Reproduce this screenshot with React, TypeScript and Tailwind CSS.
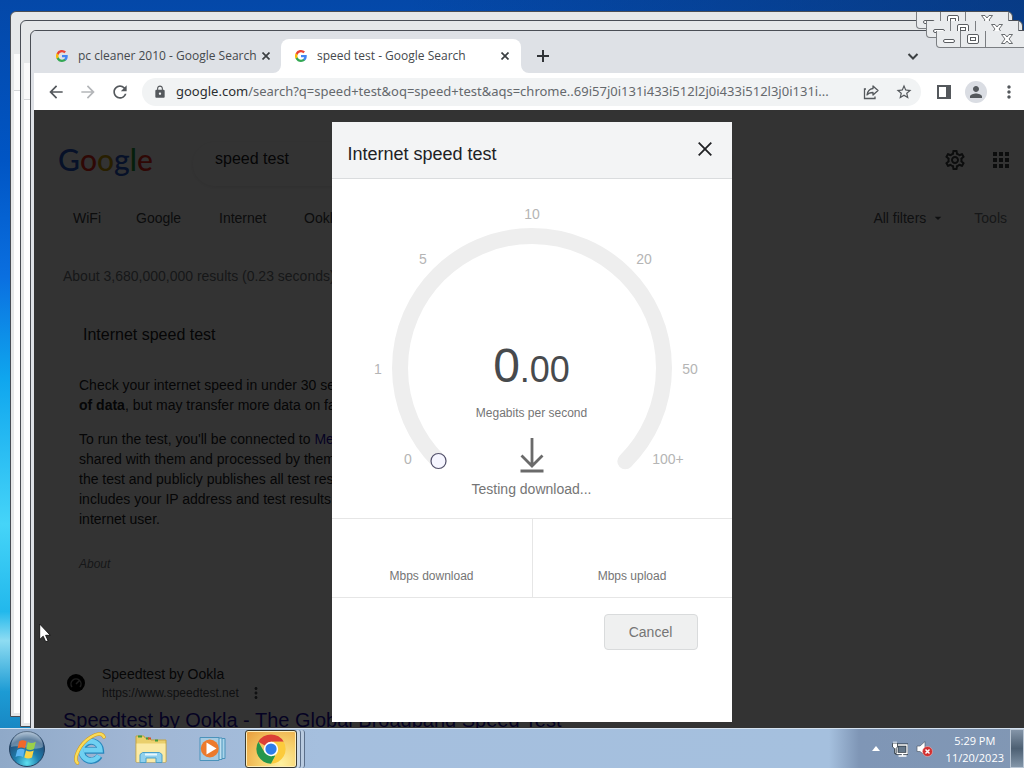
import React from "react";
import {
  MdArrowBack,
  MdArrowForward,
  MdRefresh,
  MdLock,
  MdStarBorder,
  MdPerson,
  MdMoreVert,
  MdApps,
  MdOutlineSettings,
  MdArrowDropDown,
} from "react-icons/md";

function GoogleG() {
  return (
    <svg viewBox="0 0 24 24" className="size-3 shrink-0" aria-hidden="true">
      <path fill="#4285F4" d="M23.5 12.3c0-.9-.1-1.6-.2-2.3H12v4.5h6.5c-.3 1.5-1.1 2.8-2.4 3.6v3h3.9c2.200-2.100 3.500-5.100 3.500-8.800z" />
      <path fill="#34A853" d="M12 24c3.200 0 6-1.100 8-2.900l-3.900-3c-1.100.700-2.500 1.200-4.100 1.200-3.100 0-5.800-2.100-6.700-5H1.300v3.100C3.300 21.300 7.300 24 12 24z" />
      <path fill="#FBBC05" d="M5.300 14.300a7.200 7.200 0 0 1 0-4.600V6.600H1.300a12 12 0 0 0 0 10.800z" />
      <path fill="#EA4335" d="M12 4.700c1.800 0 3.300.6 4.600 1.800L20 3.100A12 12 0 0 0 1.300 6.600l4 3.100c.9-2.800 3.600-5 6.700-5z" />
    </svg>
  );
}

function CaptionButtons() {
  return (
    <div className="absolute top-0 right-[3px] z-10 flex h-[17px] divide-x divide-[#7b7e82] rounded-b-[4px] border-x border-b border-[#7b7e82] bg-[#e9ebed]">
      <button aria-label="Minimize" className="flex w-6 items-center justify-center">
        <svg viewBox="0 0 12 12" className="size-3" fill="#fff" stroke="#5a5d61">
          <rect x="0.500" y="6.500" width="11" height="3" rx="1.500" />
        </svg>
      </button>
      <button aria-label="Restore" className="flex w-[25px] items-center justify-center">
        <svg viewBox="0 0 12 12" className="size-3" fill="#fff" stroke="#5a5d61">
          <rect x="0.500" y="1.500" width="11" height="9" rx="1.500" />
          <rect x="3.500" y="4.500" width="5" height="3" />
        </svg>
      </button>
      <button aria-label="Close window" className="flex w-[42px] items-center justify-center">
        <svg viewBox="0 0 12 12" className="size-3" fill="#fff" stroke="#5a5d61" strokeWidth=".9">
          <path d="M.5 1.500h3.500L6 4l2-2.500h3.500L8 6l3.500 4.500H8L6 8l-2 2.500H.5L4 6z" />
        </svg>
      </button>
    </div>
  );
}

function BackWindow({ place }: { place: string }) {
  return (
    <div className={`absolute overflow-hidden rounded-t-[6px] border border-[#4a4e55] bg-[#e6e8e9] px-[3px] pb-[3px] ${place}`}>
      <CaptionButtons />
      <div className="flex h-full flex-col">
        <div className="h-[42px] shrink-0" />
        <div className="h-[37px] shrink-0 border-b border-[#d5d7d9] bg-[#fafafa]" />
        <div className="flex-1 bg-white" />
      </div>
    </div>
  );
}

function TabStrip() {
  return (
    <div className="flex h-[42px] shrink-0 items-end bg-[#dee1e6] pr-[106px] text-xs text-[#45494d]">
      <div className="flex h-[34px] w-[247px] items-center pr-[7px] pl-[22px]">
        <GoogleG />
        <span className="ml-2.5 flex-1 whitespace-nowrap">pc cleaner 2010 - Google Search</span>
        <TabClose label="Close pc cleaner 2010 tab" />
      </div>
      <div className="relative flex h-[34px] w-60 items-center rounded-t-lg bg-white pr-2 pl-3.5">
        <GoogleG />
        <span className="ml-2.5 flex-1 whitespace-nowrap">speed test - Google Search</span>
        <TabClose label="Close speed test tab" />
        <svg viewBox="0 0 8 8" className="absolute bottom-0 -left-2 size-2" fill="#fff">
          <path d="M8 0v8H0a8 8 0 0 0 8-8z" />
        </svg>
        <svg viewBox="0 0 8 8" className="absolute -right-2 bottom-0 size-2" fill="#fff">
          <path d="M0 0v8h8a8 8 0 0 1-8-8z" />
        </svg>
      </div>
      <button aria-label="New tab" className="flex h-[34px] w-11 items-center justify-center">
        <svg viewBox="0 0 12 12" className="size-3" stroke="#303337" strokeWidth="2">
          <path d="M6 0v12M0 6h12" />
        </svg>
      </button>
      <button aria-label="Search tabs" className="ml-auto flex h-[34px] w-5 items-center justify-center">
        <svg viewBox="0 0 12 12" className="size-3" fill="none" stroke="#3c4043" strokeWidth="2">
          <path d="M1.500 4 6 8.500 10.500 4" />
        </svg>
      </button>
    </div>
  );
}

function TabClose({ label }: { label: string }) {
  return (
    <button aria-label={label} className="flex size-4 items-center justify-center">
      <svg viewBox="0 0 8 8" className="size-2" stroke="#3c4043" strokeWidth="1.700">
        <path d="M.5.5l7 7M7.500.5l-7 7" />
      </svg>
    </button>
  );
}

function Toolbar() {
  return (
    <div className="flex h-[37px] shrink-0 items-center bg-white pr-2.5 pl-3 text-[#54585c]">
      <button aria-label="Back" className="mr-3"><MdArrowBack className="size-5" /></button>
      <button aria-label="Forward" className="mr-3 text-[#b4b6b9]"><MdArrowForward className="size-5" /></button>
      <button aria-label="Reload" className="mr-3"><MdRefresh className="size-5" /></button>
      <form className="flex h-7 min-w-0 flex-1 items-center rounded-full bg-[#f1f3f4] pr-2 pl-[11px]" onSubmit={(e) => e.preventDefault()}>
        <MdLock className="mr-[9px] size-3.5 shrink-0" />
        <div role="textbox" aria-label="Address" aria-readonly="true" className="min-w-0 flex-1 font-['Noto_Sans',sans-serif] text-[13px] whitespace-nowrap text-[#65696d]">
          <span className="text-[#2b2e31]">google.com</span>/search?q=speed+test&amp;oq=speed+test&amp;aqs=chrome..69i57j0i131i433i512l2j0i433i512l3j0i131i...
        </div>
        <button type="button" aria-label="Share" className="mr-4">
          <svg viewBox="0 0 16 16" className="size-4" fill="none" stroke="currentColor" strokeWidth="1.300">
            <path d="M3 5H1.500v9.500H12V12.500" />
            <path d="M10 2l5 4.500-5 4.500V8.500C7 8.500 5.200 9.300 4 11c.5-3.500 2.500-6 6-6.500z" strokeLinejoin="round" />
          </svg>
        </button>
        <button type="button" aria-label="Bookmark"><MdStarBorder className="size-[18px]" /></button>
      </form>
      <button aria-label="Side panel" className="ml-4">
        <svg viewBox="0 0 14 14" className="size-3.5">
          <path d="M1 1h12v12H1z" fill="none" stroke="currentColor" strokeWidth="2" />
          <path d="M9 1h4v12H9z" fill="currentColor" />
        </svg>
      </button>
      <button aria-label="Profile" className="ml-3.5 flex size-[22px] items-center justify-center rounded-full bg-[#dadde3]">
        <MdPerson className="size-[18px]" />
      </button>
      <button aria-label="Chrome menu" className="ml-3"><MdMoreVert className="size-5" /></button>
    </div>
  );
}

function SearchPage() {
  return (
    <div className="absolute inset-0 overflow-hidden bg-white text-sm text-[#202124]">
      <header className="flex h-[76px] items-end px-6">
        <a href="#home" aria-label="Google home" className="flex w-[135px] font-['Lato',sans-serif] text-[30px] leading-[54px] font-medium">
          <span className="text-[#2456c8]">G</span>
          <span className="text-[#ea2a1c]">o</span>
          <span className="text-[#c89a00]">o</span>
          <span className="text-[#2456c8]">g</span>
          <span className="text-[#1c9a3c]">l</span>
          <span className="text-[#ea2a1c]">e</span>
        </a>
        <input
          aria-label="Search"
          defaultValue="speed test"
          className="h-11 w-[540px] rounded-full px-[22px] pb-2.5 text-base shadow-[0_1px_4px_rgba(64,60,67,.12)] outline-none"
        />
        <button aria-label="Settings" className="mb-3.5 ml-auto text-[#3c4043]"><MdOutlineSettings className="size-6" /></button>
        <button aria-label="Apps" className="mr-[-8px] mb-3.5 ml-[22px] text-[#3c4043]"><MdApps className="size-6" /></button>
      </header>
      <nav className="flex h-16 items-center pr-[22px] pl-[39px] text-[#3c4043]">
        <a href="#wifi" className="w-[63px]">WiFi</a>
        <a href="#google" className="w-[83px]">Google</a>
        <a href="#internet" className="w-[85px]">Internet</a>
        <a href="#ookla">Ookla</a>
        <button className="ml-auto flex items-center text-[#4d5156]">
          All filters
          <MdArrowDropDown className="ml-1 size-4" />
        </button>
        <button className="ml-7 text-[#70757a]">Tools</button>
      </nav>
      <main className="pl-[29px]">
        <p className="mt-4 leading-5 text-[#70757a]">About 3,680,000,000 results (0.23 seconds)</p>
        <section className="w-[652px] pt-[37px]">
          <h2 className="pl-5 text-base leading-6">Internet speed test</h2>
          <div className="pl-4 leading-5 whitespace-nowrap">
            <p className="mt-7">
              Check your internet speed in under 30 seconds. The speed test usually transfers less than <b>40 MB</b>
              <br />
              <b>of data</b>, but may transfer more data on fast connections.
            </p>
            <p className="mt-3.5">
              To run the test, you'll be connected to <span className="text-[#1a0dab]">Measurement Lab</span> (M-Lab)
              <br />
              shared with them and processed by them in accordance
              <br />
              the test and publicly publishes all test results to promote
              <br />
              includes your IP address and test results, but doesn't
              <br />
              internet user.
            </p>
            <a href="#about" className="mt-[25px] block text-xs leading-5 text-[#70757a] italic">About</a>
          </div>
        </section>
        <article className="mt-[90px]">
          <div className="flex items-center">
            <svg viewBox="0 0 26 26" className="size-[26px]" aria-hidden="true">
              <circle cx="13" cy="13" r="9" fill="#000" />
              <path d="M9 17a5 5 0 1 1 8 0M13 14l3-3" fill="none" stroke="#999" strokeWidth="1.500" />
            </svg>
            <div className="ml-[13px]">
              <div className="leading-5">Speedtest by Ookla</div>
              <div className="flex items-center text-xs leading-[18px] text-[#4d5156]">
                https://www.speedtest.net
                <MdMoreVert className="ml-2 size-[18px]" />
              </div>
            </div>
          </div>
          <h3 className="mt-[5px] text-xl leading-[26px] whitespace-nowrap text-[#1a0dab]">
            <a href="#speedtest">Speedtest by Ookla - The Global Broadband Speed Test</a>
          </h3>
        </article>
      </main>
    </div>
  );
}

const gaugeLabels = [
  { text: "0", x: 76, y: 285 },
  { text: "1", x: 46, y: 195 },
  { text: "5", x: 91, y: 85 },
  { text: "10", x: 200, y: 40 },
  { text: "20", x: 312, y: 85 },
  { text: "50", x: 358, y: 195 },
  { text: "100+", x: 336, y: 285 },
];

function SpeedDialog() {
  return (
    <div role="dialog" aria-label="Internet speed test" className="w-[400px] bg-white pb-[72px] text-[#757575]">
      <header className="flex h-[57px] items-center justify-between border-b border-[#dadcde] bg-[#f3f4f5] px-4">
        <h1 className="pt-2 text-lg text-[#202124]">Internet speed test</h1>
        <button aria-label="Close" className="flex size-[22px] items-center justify-center">
          <svg viewBox="0 0 14 14" className="mb-0.5 size-3.5" stroke="#202124" strokeWidth="1.800">
            <path d="M.7.7l12.600 12.600M13.300.7.7 13.300" />
          </svg>
        </button>
      </header>
      <div className="grid h-[340px] border-b border-[#e6e6e6]">
        <svg viewBox="0 0 400 339" className="col-start-1 row-start-1 w-full" fill="none">
          <path d="M106.700 282.300A132 132 0 1 1 293.300 282.300" stroke="#eeeeee" strokeWidth="16" strokeLinecap="round" />
          <circle cx="106.500" cy="282" r="7.500" fill="#f6f6ff" stroke="#52506a" strokeWidth="1.200" />
          {gaugeLabels.map((l) => (
            <text key={l.text} x={l.x} y={l.y} textAnchor="middle" fontSize="14" fill="#b5b5b5">
              {l.text}
            </text>
          ))}
        </svg>
        <div className="col-start-1 row-start-1 flex flex-col items-center pt-[159px]">
          <div className="text-5xl leading-[56px] text-[#474a4d]">
            0<span className="text-4xl leading-[56px]">.00</span>
          </div>
          <div className="mt-[7px] text-xs">Megabits per second</div>
          <svg viewBox="0 0 24 36" className="mt-4 h-9 w-6" fill="none" stroke="#6a6a6a" strokeWidth="2.800">
            <path d="M12 1v28M1.500 18.500 12 29l10.500-10.500M.5 34h23" />
          </svg>
          <div className="mt-1.5 text-sm">Testing download...</div>
        </div>
      </div>
      <div className="grid h-[79px] grid-cols-2 border-b border-[#e6e6e6] text-xs">
        <div className="flex items-end justify-center pb-[13px]">Mbps download</div>
        <div className="flex items-end justify-center border-l border-[#e6e6e6] pb-[13px]">Mbps upload</div>
      </div>
      <footer className="flex justify-end px-[34px] pt-4">
        <button className="h-9 w-[94px] rounded-[4px] border border-[#d9dbdc] bg-[#eff0f0] text-sm">Cancel</button>
      </footer>
    </div>
  );
}

function BrowserWindow() {
  return (
    <div className="absolute top-[30px] right-[-9px] bottom-[-9px] left-[30px] overflow-hidden rounded-t-[6px] border border-[#4a4e55] bg-[#dee1e6] font-['Liberation_Sans',sans-serif]">
      <CaptionButtons />
      <div className="flex h-full flex-col px-[3px] pb-[3px]">
        <div className="font-['Open_Sans','Noto_Sans',sans-serif]">
          <TabStrip />
          <Toolbar />
        </div>
        <div className="relative min-h-0 flex-1">
          <SearchPage />
          <div className="absolute inset-0 flex items-start justify-center bg-black/80 pt-3">
            <SpeedDialog />
          </div>
        </div>
      </div>
    </div>
  );
}

function StartOrb() {
  return (
    <svg viewBox="0 0 38 38" className="size-[38px]">
      <defs>
        <radialGradient id="orb" cx="50%" cy="90%" r="85%">
          <stop offset="0" stopColor="#5ee0f0" />
          <stop offset=".4" stopColor="#1f7fae" />
          <stop offset=".8" stopColor="#224f7a" />
          <stop offset="1" stopColor="#7f9dba" />
        </radialGradient>
      </defs>
      <circle cx="19" cy="19" r="17.500" fill="url(#orb)" stroke="#23405f" />
      <path d="M3 17A16 16 0 0 1 35 17C27 22 12 14 3 17z" fill="#fff" opacity=".3" />
      <path d="M11 11.500c3-1.800 5-1.500 7.500-.2L17 18.500c-2.500-1.300-5-1.500-7.500.1z" fill="#f0682a" />
      <path d="M19.800 12c2.500 1.300 5 1.300 8-.3L26 19c-2.800 1.600-5 1.300-7.700 0z" fill="#9ad04a" />
      <path d="M9.200 19.900c2.500-1.600 5-1.400 7.500-.1L15 27c-2.500-1.300-5-1.500-7.500 0z" fill="#5ab4f2" />
      <path d="M18 20.400c2.500 1.300 5 1.500 7.700 0L24 27.500c-2.800 1.600-5.200 1.300-7.700 0z" fill="#fbd445" />
    </svg>
  );
}

function ExplorerE() {
  return (
    <svg viewBox="0 0 32 34" className="h-[34px] w-8">
      <path d="M25.500 24A9.500 9.500 0 1 1 26.800 18.500H10" fill="none" stroke="#2787bd" strokeWidth="6.500" />
      <path d="M25 23.600A9.500 9.500 0 1 1 26.300 18.200H10" fill="none" stroke="#6fd0f2" strokeWidth="4.800" />
      <path d="M3.500 31C-1 27 5 12 17 5c5-3 11-5 13 0" fill="none" stroke="#d49a1c" strokeWidth="3.500" strokeLinecap="round" />
      <path d="M3.500 31C-1 27 5 12 17 5c5-3 11-5 13 0" fill="none" stroke="#f9dc58" strokeWidth="2.400" strokeLinecap="round" />
    </svg>
  );
}

function FolderIcon() {
  return (
    <svg viewBox="0 0 32 30" className="h-[30px] w-8">
      <path d="M1 2h8l1 2h5l1 2h15v22H1z" fill="#e9cf6c" stroke="#c5a443" />
      <path d="M3 2.500h4M11 4.500h3M20 6.500h3" stroke="#3f9a3a" strokeWidth="2" />
      <path d="M13 4.500h3" stroke="#d4502c" strokeWidth="2" />
      <path d="M1.500 9.500h29v18.500h-29z" fill="#faeaa6" />
      <path d="M5 28.500v-8l2.500-2h17l2.500 2v8h-6V24H11v4.500z" fill="#8fd0ee" stroke="#4a9fc8" />
      <path d="M10 20.500h12" stroke="#e6f6fc" strokeWidth="2" />
    </svg>
  );
}

function PlayerIcon() {
  return (
    <svg viewBox="0 0 28 26" className="h-[26px] w-7">
      <path d="M9 2.500h17v20H9z" fill="#a9d4ea" stroke="#4b93bb" />
      <path d="M5 2h18v21.500H5z" fill="#bfe0f0" stroke="#4b93bb" />
      <path d="M1 1.500h19v23H1z" fill="#a6cbe2" stroke="#4b93bb" />
      <circle cx="10.800" cy="12.500" r="9" fill="#ec7a2c" />
      <path d="M7.500 6.500v12l10-6z" fill="#fff" />
    </svg>
  );
}

function ChromeIcon() {
  return (
    <svg viewBox="0 0 48 48" className="size-[30px]">
      <path d="M24 24 3.700 12.300A23.500 23.500 0 0 1 44.300 12.300H24z" fill="#dc4035" />
      <path d="M24 12.300h20.300A23.500 23.500 0 0 1 24 47.500l10-17.700z" fill="#fccb3c" />
      <path d="M3.700 12.300 14 30l10 5.500 7-1L24 47.500A23.500 23.500 0 0 1 3.700 12.300z" fill="#26964b" />
      <circle cx="24" cy="24" r="11.500" fill="#fff" />
      <circle cx="24" cy="24" r="9" fill="#2f7de8" />
    </svg>
  );
}

function Cursor() {
  return (
    <svg viewBox="0 0 12 20" className="absolute top-[623px] left-[39px] z-20 h-5 w-3" aria-hidden="true">
      <path d="M.7 1v15.500l3.500-3.300 2.500 5.600 2.400-1.100-2.500-5.400h4.700z" fill="#fff" stroke="#111" strokeWidth=".9" />
    </svg>
  );
}

function Taskbar() {
  return (
    <footer className="flex h-10 shrink-0 items-center border-t border-[#d5e2f0] bg-[linear-gradient(90deg,#8fa9c8_0,#a0b6d4_130px,#a5bfde_320px,#a5c0de_calc(100%-195px),#7f96b6_calc(100%-165px),#8197b4_100%)] font-['Open_Sans','Noto_Sans',sans-serif] text-white">
      <button aria-label="Start" className="ml-2"><StartOrb /></button>
      <button aria-label="Internet Explorer" className="ml-7"><ExplorerE /></button>
      <button aria-label="Windows Explorer" className="ml-[29px]"><FolderIcon /></button>
      <button aria-label="Media Player" className="ml-8"><PlayerIcon /></button>
      <button
        aria-label="Google Chrome"
        className="ml-[18px] flex h-[38px] w-[52px] items-center justify-center rounded-[3px] border border-[#3a3a30] bg-[radial-gradient(circle_at_70%_90%,#fff1a0,#f6cf6a_45%,#e79a3a)] inset-shadow-[0_0_0_1px_#fdeebb]"
      >
        <ChromeIcon />
      </button>
      <span className="h-[38px] w-1 rounded-r-[3px] border-r border-[#5b6f8a] bg-[#cbd8e6]" />
      <span className="h-[38px] w-1 rounded-r-[3px] border-r border-[#5b6f8a] bg-[#b9cbe0]" />
      <div className="ml-auto flex h-full items-center">
        <button aria-label="Show hidden icons">
          <svg viewBox="0 0 8 5" className="h-[5px] w-2"><path d="M0 5 4 0l4 5z" fill="#fff" /></svg>
        </button>
        <svg viewBox="0 0 16 16" className="ml-3 size-4" role="img" aria-label="Network">
          <path d="M5 4h10v8.500H5z" fill="#66788a" stroke="#27323e" strokeWidth="2.800" />
          <path d="M5 4h10v8.500H5zM6.500 15h8M10.500 12v3" fill="none" stroke="#fff" strokeWidth="1.400" />
          <path d="M.5 2.500h5V6L4 7.500v5H2.500v-5L.5 6z" fill="#fff" stroke="#27323e" strokeWidth=".8" />
          <path d="M2 .5v2.500M4 .5v2.500" stroke="#fff" />
        </svg>
        <svg viewBox="0 0 18 16" className="ml-2 h-4 w-[18px]" role="img" aria-label="Sound muted">
          <path d="M1 5h3l5-4.500v14L4 10.500H1z" fill="#fff" stroke="#55606e" strokeWidth=".7" />
          <circle cx="11.500" cy="10.500" r="5" fill="#d22f2f" stroke="#f0c0c0" strokeWidth=".5" />
          <path d="M9.500 8.500l4 4M13.500 8.500l-4 4" stroke="#fff" strokeWidth="1.500" />
        </svg>
        <time className="ml-3 block text-center text-[11px] leading-[17px] whitespace-nowrap">
          5:29 PM
          <br />
          11/20/2023
        </time>
        <button
          aria-label="Show desktop"
          className="ml-1.5 h-full w-3.5 border border-[#b9c6d4] bg-linear-to-b from-[#8495a8] via-[#4d6073] to-[#8396a9]"
        />
      </div>
    </footer>
  );
}

export default function App() {
  return (
    <div className="flex h-screen flex-col overflow-hidden bg-[#0a58b8]">
      <div className="relative min-h-0 flex-1 overflow-hidden bg-[linear-gradient(90deg,transparent_40%,rgba(10,50,110,.6)),linear-gradient(180deg,#0448a8_0,#0055c4_22%,#0a6fe0_38%,#0fa6ee_52%,#45d4f8_72%,#22b8ec_84%,#8edcf2_88%,#1d9bd4_95%,#1888c4_100%)]">
        <BackWindow place="top-[11px] right-[11px] bottom-[11px] left-[10px]" />
        <BackWindow place="top-[20px] right-[1px] bottom-[1px] left-[20px]" />
        <BrowserWindow />
        <Cursor />
      </div>
      <Taskbar />
    </div>
  );
}
